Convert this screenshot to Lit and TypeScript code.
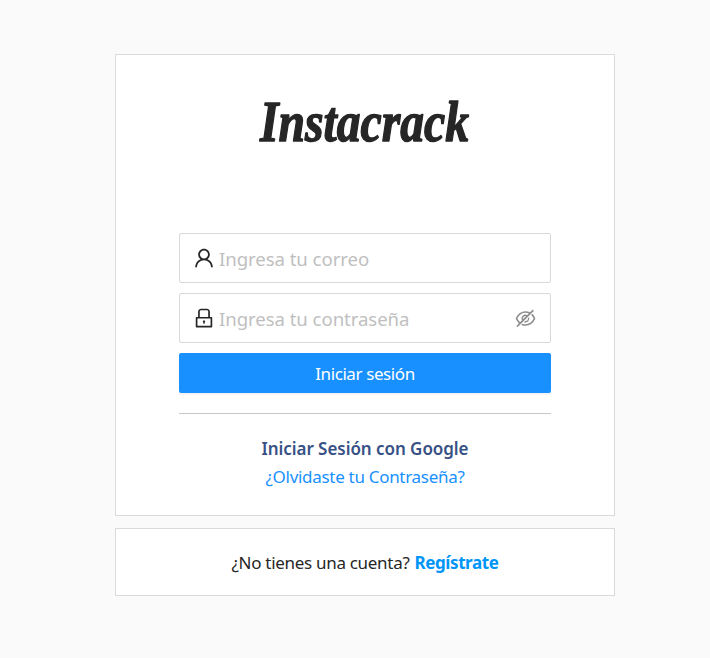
import { LitElement, html, svg, css } from "lit";
import { customElement } from "lit/decorators.js";

const userIcon = svg`<path d="M858.5 763.6a374 374 0 00-80.6-119.5 375.63 375.63 0 00-119.5-80.6c-.4-.2-.8-.3-1.2-.5C719.5 518 760 444.7 760 362c0-137-111-248-248-248S264 225 264 362c0 82.7 40.5 156 102.8 201.1-.4.2-.8.3-1.2.5-44.8 18.9-85 46-119.5 80.6a375.63 375.63 0 00-80.6 119.5A371.7 371.7 0 00136 901.8a8 8 0 008 8.2h60c4.4 0 7.9-3.5 8-7.8 2-77.2 33-149.5 87.8-204.3 56.7-56.7 132-87.9 212.2-87.9s155.5 31.2 212.2 87.9C779 752.7 810 825 812 902.2c.1 4.4 3.6 7.8 8 7.8h60a8 8 0 008-8.2c-1-47.8-10.9-94.3-29.5-138.2zM512 534c-45.9 0-89.1-17.9-121.6-50.4S340 407.9 340 362c0-45.9 17.9-89.1 50.4-121.6S466.1 190 512 190s89.1 17.9 121.6 50.4S684 316.1 684 362c0 45.9-17.9 89.1-50.4 121.6S557.9 534 512 534z"/>`;
const lockIcon = svg`<path d="M832 464h-68V240c0-70.7-57.3-128-128-128H388c-70.7 0-128 57.3-128 128v224h-68c-17.7 0-32 14.3-32 32v384c0 17.7 14.3 32 32 32h640c17.7 0 32-14.3 32-32V496c0-17.7-14.3-32-32-32zM332 240c0-30.9 25.1-56 56-56h248c30.9 0 56 25.1 56 56v224H332V240zm460 600H232V536h560v304zM484 701v53c0 4.4 3.6 8 8 8h40c4.4 0 8-3.6 8-8v-53a48.01 48.01 0 10-56 0z"/>`;
const hiddenIcon = svg`<path d="M942.2 486.2Q889.47 375.11 816.7 305l-50.88 50.88C807.31 395.53 843.45 447.4 874.7 512 791.5 684.2 673.4 766 512 766q-72.67 0-133.87-22.38L323 798.75Q408 838 512 838q288.3 0 430.2-300.3a60.29 60.29 0 000-51.5zm-63.57-320.64L836 122.88a8 8 0 00-11.32 0L715.31 232.2Q624.86 186 512 186q-288.3 0-430.2 300.3a60.3 60.3 0 000 51.5q56.69 119.4 136.5 191.41L112.48 835a8 8 0 000 11.31L155.17 889a8 8 0 0011.31 0l712.15-712.12a8 8 0 000-11.32zM149.3 512C232.6 339.8 350.7 258 512 258c54.54 0 104.13 9.36 149.12 28.39l-70.3 70.3a176 176 0 00-238.13 238.13l-83.42 83.42C223.1 637.49 183.3 582.28 149.3 512zm246.7 0a112.11 112.11 0 01146.2-106.69L401.31 546.2A112 112 0 01396 512z"/><path d="M508 624c-3.46 0-6.87-.16-10.25-.47l-52.82 52.82a176.09 176.09 0 00227.42-227.42l-52.82 52.82c.31 3.38.47 6.79.47 10.25a111.94 111.94 0 01-112 112z"/>`;

@customElement("app-root")
export class AppRoot extends LitElement {
  static styles = css`
    :host {
      display: flex;
      flex-direction: column;
      align-items: center;
      gap: 12px;
      box-sizing: border-box;
      min-height: 658px;
      padding: 54px 0 62px 20px;
      background: #fafafa;
      color: #262626;
      font-family: "Noto Sans", sans-serif;
      font-size: 17px;
    }
    .card {
      box-sizing: border-box;
      width: 500px;
      border: 1px solid #dbdbdb;
      background: #fff;
    }
    .login {
      display: flex;
      flex-direction: column;
      height: 462px;
      padding: 38px 63px 0;
    }
    .logo {
      display: block;
      align-self: center;
      width: 220px;
      height: 60px;
      margin-bottom: 80px;
      overflow: visible;
      fill: #262626;
      stroke: #262626;
      stroke-width: 1.4px;
      stroke-linejoin: round;
      font: italic bold 56px "Liberation Serif", serif;
    }
    .field {
      display: flex;
      align-items: center;
      box-sizing: border-box;
      height: 50px;
      margin-bottom: 10px;
      padding: 0 13px 0 12px;
      border: 1px solid #d9d9d9;
      border-radius: 2px;
    }
    .icon {
      flex: none;
      width: 24px;
      height: 24px;
      fill: #262626;
    }
    .toggle {
      width: 23px;
      height: 23px;
      fill: #8c8c8c;
    }
    input {
      flex: 1;
      min-width: 0;
      height: 40px;
      padding: 0;
      margin: 0 0 0 3px;
      border: 0;
      outline: 0;
      background: none;
      font: 18.6px "Noto Sans", sans-serif;
      letter-spacing: -0.06px;
    }
    input::placeholder {
      color: #bfbfbf;
      opacity: 1;
    }
    button {
      height: 40px;
      padding: 0;
      border: 0;
      border-radius: 2px;
      background: #1890ff;
      box-shadow: 0 2px 0 rgba(0, 0, 0, 0.045);
      color: #fff;
      font: 17px "Noto Sans", sans-serif;
      letter-spacing: -0.4px;
    }
    .rule {
      height: 1px;
      margin: 20px 0 21px;
      background: #c7c7c7;
    }
    .link {
      align-self: center;
      line-height: 28px;
      color: #1890ff;
      text-decoration: none;
      letter-spacing: -0.3px;
    }
    .google {
      color: #385185;
      font-weight: 600;
      letter-spacing: -0.05px;
    }
    .signup {
      display: flex;
      align-items: center;
      justify-content: center;
      gap: 5px;
      height: 68px;
      letter-spacing: -0.3px;
    }
    .register {
      color: #0095f6;
      font-weight: 700;
      text-decoration: none;
      letter-spacing: -0.4px;
    }
  `;

  render() {
    return html`
      <section class="card login">
        <svg class="logo" viewBox="0 0 220 60">
          <text x="5" y="47.5" textLength="209" lengthAdjust="spacingAndGlyphs">Instacrack</text>
        </svg>
        <label class="field">
          <svg class="icon" viewBox="0 0 1024 1024">${userIcon}</svg>
          <input type="email" placeholder="Ingresa tu correo" />
        </label>
        <label class="field">
          <svg class="icon" viewBox="0 0 1024 1024">${lockIcon}</svg>
          <input type="password" placeholder="Ingresa tu contraseña" />
          <svg class="icon toggle" viewBox="0 0 1024 1024">${hiddenIcon}</svg>
        </label>
        <button type="button">Iniciar sesión</button>
        <div class="rule"></div>
        <a class="link google">Iniciar Sesión con Google</a>
        <a class="link">¿Olvidaste tu Contraseña?</a>
      </section>
      <section class="card signup">
        <span>¿No tienes una cuenta?</span>
        <a class="register">Regístrate</a>
      </section>
    `;
  }
}
